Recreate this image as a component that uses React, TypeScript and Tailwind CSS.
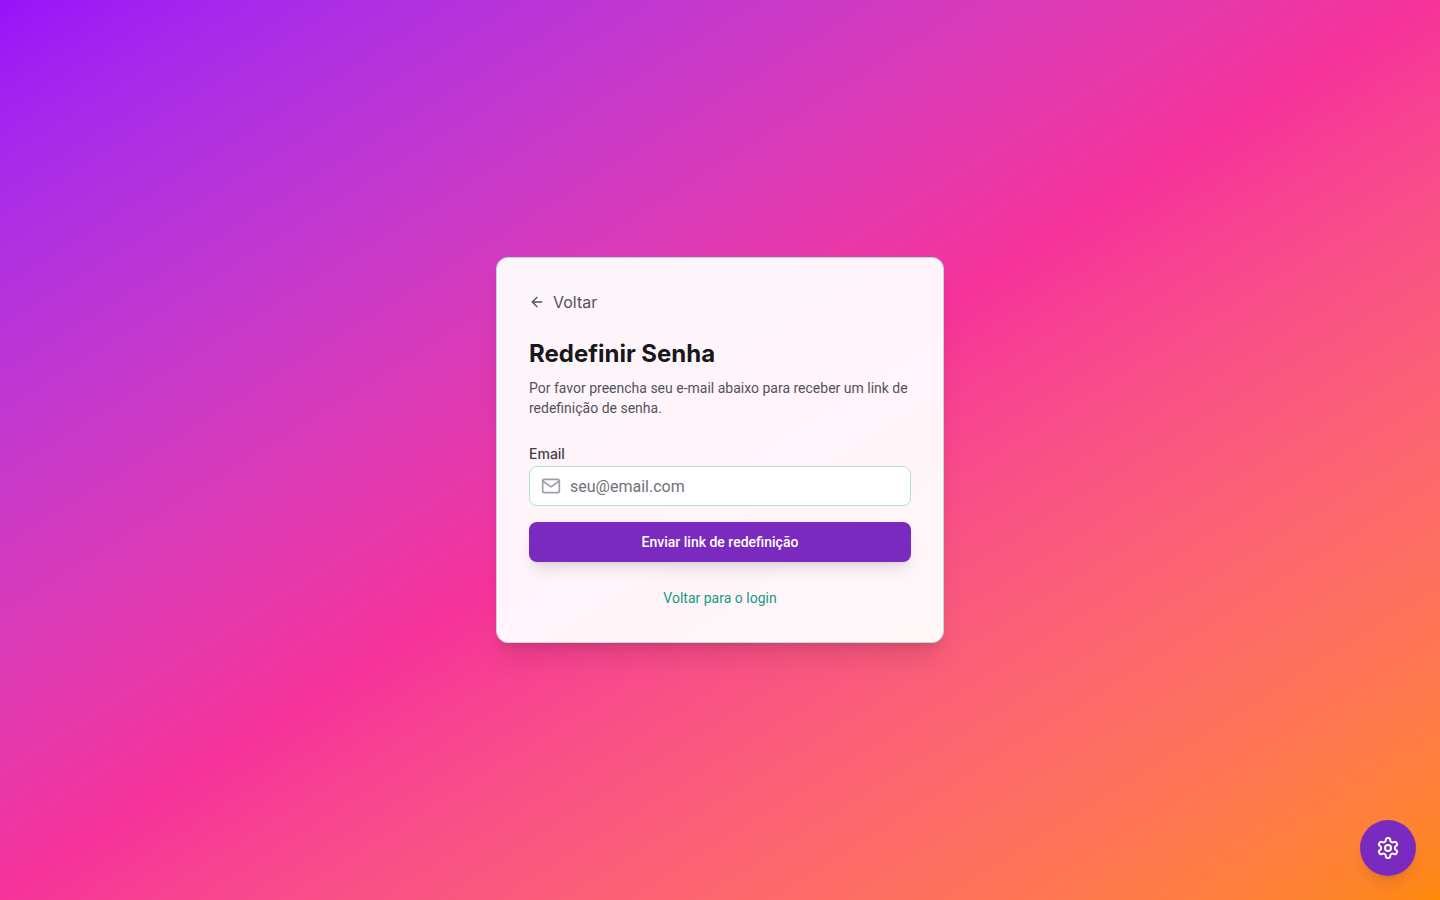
import { useState } from "react"
import { ArrowLeft } from "lucide-react"
import { FiMail } from "react-icons/fi"

const SettingsIcon = () => (
    <svg
        viewBox="0 0 24 24"
        fill="none"
        stroke="currentColor"
        strokeWidth="2"
        strokeLinecap="round"
        strokeLinejoin="round"
        className="size-6"
        aria-hidden="true"
    >
        <path d="M12.22 2h-.44a2 2 0 0 0-2 2v.18a2 2 0 0 1-1 1.73l-.43.25a2 2 0 0 1-2 0l-.15-.08a2 2 0 0 0-2.73.73l-.22.38a2 2 0 0 0 .73 2.73l.15.1a2 2 0 0 1 1 1.72v.51a2 2 0 0 1-1 1.74l-.15.09a2 2 0 0 0-.73 2.73l.22.38a2 2 0 0 0 2.73.73l.15-.08a2 2 0 0 1 2 0l.43.25a2 2 0 0 1 1 1.73V20a2 2 0 0 0 2 2h.44a2 2 0 0 0 2-2v-.18a2 2 0 0 1 1-1.73l.43-.25a2 2 0 0 1 2 0l.15.08a2 2 0 0 0 2.73-.73l.22-.39a2 2 0 0 0-.73-2.73l-.15-.08a2 2 0 0 1-1-1.74v-.5a2 2 0 0 1 1-1.74l.15-.09a2 2 0 0 0 .73-2.73l-.22-.38a2 2 0 0 0-2.73-.73l-.15.08a2 2 0 0 1-2 0l-.43-.25a2 2 0 0 1-1-1.73V4a2 2 0 0 0-2-2z" />
        <circle cx="12" cy="12" r="3" />
    </svg>
)

const App = () => {
    const [email, setEmail] = useState("")

    return (
        <div className="flex min-h-screen items-center justify-center bg-linear-to-br from-purple-600 via-pink-500 to-orange-400 p-4 font-['Roboto',sans-serif]">
            <main className="w-full max-w-md rounded-xl border border-[#b2dfdb] bg-white/95 p-8 shadow-xl">
                <a href="#" className="mb-6 flex w-fit items-center gap-2 font-['Inter',sans-serif] text-[#52525c]">
                    <ArrowLeft className="size-4" />
                    Voltar
                </a>

                <h1 className="mb-2 font-['Inter',sans-serif] text-2xl font-bold text-[#18181b]">Redefinir Senha</h1>
                <p className="mb-6 text-sm text-[#52525c]">
                    Por favor preencha seu e-mail abaixo para receber um link de redefinição de senha.
                </p>

                <form onSubmit={(e) => e.preventDefault()}>
                    <div className="mb-4">
                        <label htmlFor="email" className="font-['Inter',sans-serif] text-sm font-medium text-[#3f3f46]">Email</label>
                        <div className="relative">
                            <FiMail className="absolute left-3 top-1/2 size-5 -translate-y-1/2 text-[#9f9fa9]" />
                            <input
                                id="email"
                                type="email"
                                placeholder="seu@email.com"
                                value={email}
                                onChange={(e) => setEmail(e.target.value)}
                                className="h-10 w-full rounded-lg border border-[#b2dfdb] bg-white pl-10 pr-3 text-[#18181b] placeholder:text-[#71717b]"
                            />
                        </div>
                    </div>
                    <button type="submit" className="h-10 w-full rounded-lg bg-[#7b2abf] text-sm font-medium text-white shadow-lg">
                        Enviar link de redefinição
                    </button>
                </form>

                <div className="mt-6 text-center">
                    <a href="#" className="text-sm text-[#179a86]">Voltar para o login</a>
                </div>
            </main>

            <button
                aria-label="Configurações"
                className="fixed bottom-6 right-6 flex size-14 items-center justify-center rounded-full bg-[#7b2abf] text-white shadow-lg"
            >
                <SettingsIcon />
            </button>
        </div>
    )
}

export default App
